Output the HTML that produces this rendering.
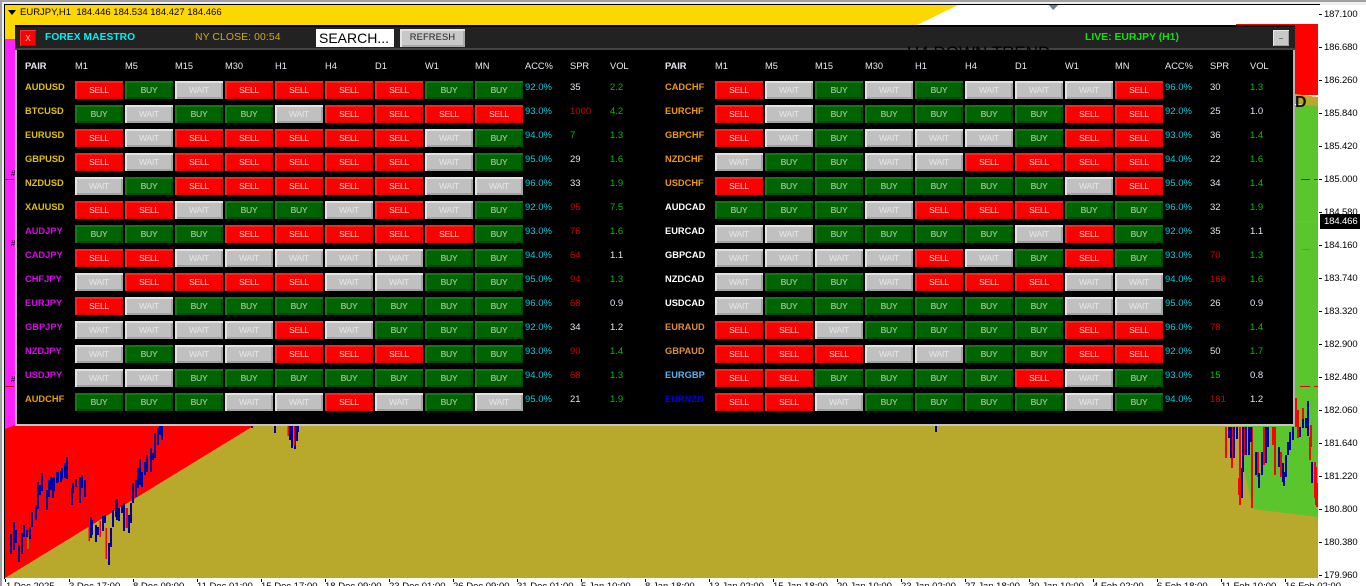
<!DOCTYPE html>
<html><head><meta charset="utf-8"><title>FOREX MAESTRO</title>
<style>
html,body{margin:0;padding:0;width:1366px;height:586px;overflow:hidden;background:#fff;font-family:"Liberation Sans",Arial,sans-serif}
#w{position:relative;width:1366px;height:586px;overflow:hidden;background:#f0f0f0}
.a{position:absolute}
#top{left:0;top:0;width:1366px;height:2px;background:#a0a0a0}
#lft{left:0;top:0;width:2px;height:586px;background:#a0a0a0}
#chart{left:4px;top:4px;width:1314px;height:574px;border:1px solid #000;border-width:1px 1px 1px 1px;background:#fff;box-sizing:content-box;overflow:hidden}
#ax{left:1319px;top:5px;width:47px;height:581px;background:#fff}
#bx{left:0;top:579px;width:1366px;height:7px;background:#fff;overflow:hidden}
.y{position:absolute;left:1324px;font-size:9.5px;line-height:12px;color:#000;letter-spacing:-.12px}
.yt{position:absolute;left:1319px;width:3px;height:1px;background:#000}
.xl{position:absolute;top:2px;font-size:9.5px;line-height:12px;color:#000;white-space:nowrap}
.xt{position:absolute;top:579px;width:1px;height:3px;background:#000}
#panel{left:15px;top:25px;width:1280px;height:401px;background:#000;box-sizing:border-box;border-left:2px solid #b4b4b4;border-right:2px solid #b4b4b4;border-bottom:2px solid #c4c4c4}
#bar{left:15px;top:25px;width:1280px;height:25px;box-sizing:border-box;background:#222;border-top:2px solid #000;border-bottom:2px solid #444;overflow:hidden}
.side{position:absolute;top:81px;display:grid;grid-template-columns:50px repeat(9,50px) 45px 40px 40px;grid-auto-rows:18px;row-gap:6px}
.side>*{display:block}
.side i{font-style:normal;font-size:9.5px;line-height:11px;height:11px;white-space:nowrap;color:#fff;position:relative;top:1px}
.p{font-weight:bold;font-size:9.3px!important}
.c{color:#00d0e0!important}.g{color:#00c000!important}.r{color:#d00000!important}.k{color:#e4e4f4!important}
.gd{color:#e0c000!important}.or{color:#f09a00!important}.mg{color:#e000f0!important}.wh{color:#fff!important}.pe{color:#e08c40!important}.lb{color:#60b0f0!important}.bl{color:#0000e0!important}
.side b{width:48px;height:18px;font-weight:normal;font-size:8.6px;line-height:18px;text-align:center;letter-spacing:-.3px}
.s{background:#f00;color:#ffd8d8;box-shadow:inset 2px 2px 0 #ff2020,inset -2px -2px 0 #e60000}
.u{background:#006400;color:#c4d4c4;box-shadow:inset 2px 2px 0 #147814,inset -2px -2px 0 #004f00}
.h{background:#c0c0c0;color:#e8e8e8;box-shadow:inset 2px 2px 0 #e2e2e2,inset -2px -2px 0 #a2a2a2}
.hd{position:absolute;top:60px;font-size:9.3px;line-height:12px;color:#e8e8f0;white-space:nowrap}
.m{position:absolute;left:11px;font-size:8px;line-height:8px;color:#000;width:4px;overflow:hidden}
</style></head><body><div id="w">
<div class="a" id="chart">
<svg class="a" style="left:-5px;top:-5px" width="1366" height="586" shape-rendering="crispEdges">
<polygon points="5,5 958,5 917,25 15,25 15,39 5,39" fill="#ffd700"/>
<polygon points="5,39 15,39 15,427 5,430" fill="#ff20ff"/>
<polygon points="5,429 15,425 255,425 5,578" fill="#f00"/>
<polygon points="5,578 255,425 1243,425 1243,465 1253,509 1318,517 1318,578" fill="#b8a82c"/>
<polygon points="1243,425 1295,425 1295,105 1318,105 1318,517 1253,509 1243,465" fill="#5ac52c"/>
<polygon points="1236,24 1318,24 1318,95 1236,95" fill="#f00"/>
<polygon points="1295,94 1318,97 1318,106 1295,104" fill="#b8a82c"/>
<polygon points="1049,5 1058,5 1053,10" fill="#708090"/>
<path d="M1295 221.5H1318" stroke="#999" fill="none"/>
<path d="M1301 179.5H1310M1314 179.5H1318M1300 386.5H1310M1314 386.5H1318M5 179.5H14M5 386.5H14" stroke="#e00000" fill="none"/>
<path d="M1302 249.5H1310M5 221.5H15M5 249.5H15" stroke="#30b040" fill="none"/>
<path d="M1226 427V458M1232 438V468M1240 427V505M1252 427V508M1239 478V495M1233 427V458M1244 427V455M1258 452V477M1264 427V465M1275 427V475M1273 427V445M1281 452V477M1296 398V427M1303 408V428M1310 437V460M1311 425V447M1315 462V498M1317 483V507M1298 410V438M1316 467V505" stroke="#f00" stroke-width="2" fill="none"/>
<path d="M1229 427V438M1231 427V458M1234 427V458M1237 427V439M1242 468V498M1243 427V472M1246 427V455M1249 427V455M1251 427V442M1256 452V475M1259 473V488M1262 452V475M1266 427V463M1268 427V447M1279 447V467M1283 463V482M1284 472V486M1286 455V477M1288 442V455M1290 432V450M1293 427V440M1300 427V437M1303 419V428M1306 418V428M1308 401V436M1312 462V483" stroke="#0000a0" stroke-width="2" fill="none"/>
<path d="M28 535V549" stroke="#30e030" stroke-width="1" fill="none"/>
<path d="M11 534V554M14 522V550M16 530V543M19 545V562M22 533V554M24 525V537M27 530V537M30 527V539M32 512V527M36 505V520M38 482V509M40 485V495M42 473V491M47 490V510M49 480V497M51 477V490M53 478V498M54 477V491M57 472V483M58 472V482M61 471V482M62 468V479M65 463V478M67 457V479M72 488V505M73 483V493M76 479V487M80 477V503M82 475V488M85 480V497M91 517V538M92 520V535M96 525V542M98 527V535M103 516V531M105 515V523M109 543V565M111 528V547M113 510V527M116 500V517M117 499V520M119 508V521M122 505V513M124 503V531M129 515V533M131 503V523M133 483V503M136 480V497M138 468V488M140 459V485M142 472V487M145 462V475M147 455V472M151 448V472M153 453V460M155 433V458M158 428V445M160 425V435M162 425V440M252 426V428M275 426V433M290 426V440M292 426V448M295 426V449M297 426V441M298 426V432M936 426V432" stroke="#0000a0" stroke-width="2" fill="none"/>
<path d="M89 521V541M100 521V537M106 528V559M126 508V528M127 508V528M288 426V436M294 426V446" stroke="#f00" stroke-width="1.5" fill="none"/>
</svg>
</div>

<span class="m" style="top:170px">#</span><span class="m" style="top:240px">#</span><span class="m" style="top:376px">#</span>
<div class="a" style="left:1295px;top:92px;font-size:16px;line-height:22px;font-weight:bold;color:#111;width:12px;overflow:hidden;height:20px">D</div>

<div class="a" id="ax"></div>
<div class="a" id="bx">
<span class="xl" style="left:6px">1 Dec 2025</span><span class="xl" style="left:69px">3 Dec 17:00</span><span class="xl" style="left:133px">8 Dec 09:00</span><span class="xl" style="left:197px">11 Dec 01:00</span><span class="xl" style="left:261px">15 Dec 17:00</span><span class="xl" style="left:325px">18 Dec 09:00</span><span class="xl" style="left:389px">23 Dec 01:00</span><span class="xl" style="left:453px">26 Dec 09:00</span><span class="xl" style="left:517px">31 Dec 01:00</span><span class="xl" style="left:581px">5 Jan 10:00</span><span class="xl" style="left:645px">8 Jan 18:00</span><span class="xl" style="left:709px">13 Jan 02:00</span><span class="xl" style="left:773px">15 Jan 18:00</span><span class="xl" style="left:837px">20 Jan 10:00</span><span class="xl" style="left:901px">23 Jan 02:00</span><span class="xl" style="left:965px">27 Jan 18:00</span><span class="xl" style="left:1029px">30 Jan 10:00</span><span class="xl" style="left:1093px">4 Feb 02:00</span><span class="xl" style="left:1157px">6 Feb 18:00</span><span class="xl" style="left:1221px">11 Feb 10:00</span><span class="xl" style="left:1285px">16 Feb 02:00</span>
</div>
<i class="xt" style="left:5px"></i><i class="xt" style="left:69px"></i><i class="xt" style="left:133px"></i><i class="xt" style="left:197px"></i><i class="xt" style="left:261px"></i><i class="xt" style="left:325px"></i><i class="xt" style="left:389px"></i><i class="xt" style="left:453px"></i><i class="xt" style="left:517px"></i><i class="xt" style="left:581px"></i><i class="xt" style="left:645px"></i><i class="xt" style="left:709px"></i><i class="xt" style="left:773px"></i><i class="xt" style="left:837px"></i><i class="xt" style="left:901px"></i><i class="xt" style="left:965px"></i><i class="xt" style="left:1029px"></i><i class="xt" style="left:1093px"></i><i class="xt" style="left:1157px"></i><i class="xt" style="left:1221px"></i><i class="xt" style="left:1285px"></i>

<span class="y" style="top:9px">187.100</span><span class="y" style="top:42px">186.680</span><span class="y" style="top:75px">186.260</span><span class="y" style="top:108px">185.840</span><span class="y" style="top:141px">185.420</span><span class="y" style="top:174px">185.000</span><span class="y" style="top:207px">184.580</span><span class="y" style="top:240px">184.160</span><span class="y" style="top:273px">183.740</span><span class="y" style="top:306px">183.320</span><span class="y" style="top:339px">182.900</span><span class="y" style="top:372px">182.480</span><span class="y" style="top:405px">182.060</span><span class="y" style="top:438px">181.640</span><span class="y" style="top:471px">181.220</span><span class="y" style="top:504px">180.800</span><span class="y" style="top:537px">180.380</span><span class="y" style="top:570px">179.960</span>
<i class="yt" style="top:14px"></i><i class="yt" style="top:47px"></i><i class="yt" style="top:80px"></i><i class="yt" style="top:113px"></i><i class="yt" style="top:146px"></i><i class="yt" style="top:179px"></i><i class="yt" style="top:212px"></i><i class="yt" style="top:245px"></i><i class="yt" style="top:278px"></i><i class="yt" style="top:311px"></i><i class="yt" style="top:344px"></i><i class="yt" style="top:377px"></i><i class="yt" style="top:410px"></i><i class="yt" style="top:443px"></i><i class="yt" style="top:476px"></i><i class="yt" style="top:509px"></i><i class="yt" style="top:542px"></i><i class="yt" style="top:575px"></i>
<div class="a" style="left:1320px;top:214px;width:40px;height:15px;background:#000;color:#fff;font-size:9.5px;line-height:15px;padding-left:4px;box-sizing:border-box;letter-spacing:-.12px">184.466</div>

<div class="a" id="top"></div><div class="a" id="lft"></div>

<svg class="a" style="left:8px;top:10px" width="9" height="6"><polygon points="0,0 8,0 4,5" fill="#000"/></svg>
<div class="a" style="left:20px;top:7px;font-size:9.5px;line-height:12px;color:#000;white-space:pre">EURJPY,H1  184.446 184.534 184.427 184.466</div>

<div class="a" id="panel"></div>
<div class="a" id="bar"></div>
<div class="a" style="left:907px;top:43px;height:7px;overflow:hidden;font-size:17px;line-height:20px;color:#000;white-space:nowrap">H4 DOWN TREND</div>

<div class="a" style="left:20px;top:30px;width:16px;height:16px;background:#f00;box-shadow:inset 1px 1px 0 #ff3030,inset -1px -1px 0 #d00000;color:#ffd0d0;font-size:8.5px;line-height:16px;text-align:center">X</div>
<div class="a" style="left:45px;top:31px;font-size:10.2px;line-height:14px;font-weight:bold;color:#00f0f0;white-space:nowrap;letter-spacing:.1px">FOREX MAESTRO</div>
<div class="a" style="left:195px;top:31px;font-size:10.4px;line-height:14px;color:#d0a820;white-space:nowrap;letter-spacing:.1px">NY CLOSE: 00:54</div>
<div class="a" style="left:316px;top:29px;width:78px;height:18px;background:#fff;color:#000;font-size:14px;line-height:19px;padding-left:3px;box-sizing:border-box;white-space:nowrap">SEARCH...</div>
<div class="a" style="left:400px;top:29px;width:65px;height:18px;background:#c8c8c8;box-shadow:inset 2px 2px 0 #e4e4e4,inset -2px -2px 0 #a8a8a8;color:#222;font-size:9.3px;line-height:17px;text-align:center;letter-spacing:.15px">REFRESH</div>
<div class="a" style="left:1085px;top:31px;font-size:10.4px;line-height:14px;font-weight:bold;color:#10e010;white-space:nowrap">LIVE: EURJPY (H1)</div>
<div class="a" style="left:1273px;top:30px;width:16px;height:16px;background:#c8c8c8;box-shadow:inset 1px 1px 0 #e8e8e8,inset -1px -1px 0 #a0a0a0"><div class="a" style="left:6px;top:8px;width:4px;height:1px;background:#777"></div></div>

<span class="hd p" style="left:25px">PAIR</span><span class="hd" style="left:75px">M1</span><span class="hd" style="left:125px">M5</span><span class="hd" style="left:175px">M15</span><span class="hd" style="left:225px">M30</span><span class="hd" style="left:275px">H1</span><span class="hd" style="left:325px">H4</span><span class="hd" style="left:375px">D1</span><span class="hd" style="left:425px">W1</span><span class="hd" style="left:475px">MN</span><span class="hd" style="left:525px">ACC%</span><span class="hd" style="left:570px">SPR</span><span class="hd" style="left:610px">VOL</span>
<span class="hd p" style="left:665px">PAIR</span><span class="hd" style="left:715px">M1</span><span class="hd" style="left:765px">M5</span><span class="hd" style="left:815px">M15</span><span class="hd" style="left:865px">M30</span><span class="hd" style="left:915px">H1</span><span class="hd" style="left:965px">H4</span><span class="hd" style="left:1015px">D1</span><span class="hd" style="left:1065px">W1</span><span class="hd" style="left:1115px">MN</span><span class="hd" style="left:1165px">ACC%</span><span class="hd" style="left:1210px">SPR</span><span class="hd" style="left:1250px">VOL</span>

<div class="side" style="left:25px">
<i class="p gd">AUDUSD</i><b class="s">SELL</b><b class="u">BUY</b><b class="h">WAIT</b><b class="s">SELL</b><b class="s">SELL</b><b class="s">SELL</b><b class="s">SELL</b><b class="u">BUY</b><b class="u">BUY</b><i class="c">92.0%</i><i class="k">35</i><i class="g">2.2</i>
<i class="p gd">BTCUSD</i><b class="u">BUY</b><b class="h">WAIT</b><b class="u">BUY</b><b class="u">BUY</b><b class="h">WAIT</b><b class="s">SELL</b><b class="s">SELL</b><b class="s">SELL</b><b class="s">SELL</b><i class="c">93.0%</i><i class="r">1000</i><i class="g">4.2</i>
<i class="p gd">EURUSD</i><b class="s">SELL</b><b class="h">WAIT</b><b class="s">SELL</b><b class="s">SELL</b><b class="s">SELL</b><b class="s">SELL</b><b class="s">SELL</b><b class="h">WAIT</b><b class="u">BUY</b><i class="c">94.0%</i><i class="g">7</i><i class="g">1.3</i>
<i class="p gd">GBPUSD</i><b class="s">SELL</b><b class="h">WAIT</b><b class="s">SELL</b><b class="s">SELL</b><b class="s">SELL</b><b class="s">SELL</b><b class="s">SELL</b><b class="h">WAIT</b><b class="u">BUY</b><i class="c">95.0%</i><i class="k">29</i><i class="g">1.6</i>
<i class="p gd">NZDUSD</i><b class="h">WAIT</b><b class="u">BUY</b><b class="s">SELL</b><b class="s">SELL</b><b class="s">SELL</b><b class="s">SELL</b><b class="s">SELL</b><b class="h">WAIT</b><b class="h">WAIT</b><i class="c">96.0%</i><i class="k">33</i><i class="g">1.9</i>
<i class="p gd">XAUUSD</i><b class="s">SELL</b><b class="s">SELL</b><b class="h">WAIT</b><b class="u">BUY</b><b class="u">BUY</b><b class="h">WAIT</b><b class="s">SELL</b><b class="h">WAIT</b><b class="u">BUY</b><i class="c">92.0%</i><i class="r">95</i><i class="g">7.5</i>
<i class="p mg">AUDJPY</i><b class="u">BUY</b><b class="u">BUY</b><b class="u">BUY</b><b class="s">SELL</b><b class="s">SELL</b><b class="s">SELL</b><b class="s">SELL</b><b class="s">SELL</b><b class="u">BUY</b><i class="c">93.0%</i><i class="r">76</i><i class="g">1.6</i>
<i class="p mg">CADJPY</i><b class="s">SELL</b><b class="s">SELL</b><b class="h">WAIT</b><b class="h">WAIT</b><b class="h">WAIT</b><b class="h">WAIT</b><b class="h">WAIT</b><b class="u">BUY</b><b class="u">BUY</b><i class="c">94.0%</i><i class="r">64</i><i class="k">1.1</i>
<i class="p mg">CHFJPY</i><b class="h">WAIT</b><b class="s">SELL</b><b class="s">SELL</b><b class="s">SELL</b><b class="s">SELL</b><b class="h">WAIT</b><b class="h">WAIT</b><b class="u">BUY</b><b class="u">BUY</b><i class="c">95.0%</i><i class="r">94</i><i class="g">1.3</i>
<i class="p mg">EURJPY</i><b class="s">SELL</b><b class="h">WAIT</b><b class="u">BUY</b><b class="u">BUY</b><b class="u">BUY</b><b class="u">BUY</b><b class="u">BUY</b><b class="u">BUY</b><b class="u">BUY</b><i class="c">96.0%</i><i class="r">68</i><i class="k">0.9</i>
<i class="p mg">GBPJPY</i><b class="h">WAIT</b><b class="h">WAIT</b><b class="h">WAIT</b><b class="h">WAIT</b><b class="s">SELL</b><b class="h">WAIT</b><b class="u">BUY</b><b class="u">BUY</b><b class="u">BUY</b><i class="c">92.0%</i><i class="k">34</i><i class="k">1.2</i>
<i class="p mg">NZDJPY</i><b class="h">WAIT</b><b class="u">BUY</b><b class="h">WAIT</b><b class="h">WAIT</b><b class="s">SELL</b><b class="s">SELL</b><b class="s">SELL</b><b class="u">BUY</b><b class="u">BUY</b><i class="c">93.0%</i><i class="r">90</i><i class="g">1.4</i>
<i class="p mg">USDJPY</i><b class="h">WAIT</b><b class="h">WAIT</b><b class="u">BUY</b><b class="u">BUY</b><b class="u">BUY</b><b class="u">BUY</b><b class="u">BUY</b><b class="u">BUY</b><b class="u">BUY</b><i class="c">94.0%</i><i class="r">68</i><i class="g">1.3</i>
<i class="p or">AUDCHF</i><b class="u">BUY</b><b class="u">BUY</b><b class="u">BUY</b><b class="h">WAIT</b><b class="h">WAIT</b><b class="s">SELL</b><b class="h">WAIT</b><b class="u">BUY</b><b class="h">WAIT</b><i class="c">95.0%</i><i class="k">21</i><i class="g">1.9</i>
</div>

<div class="side" style="left:665px">
<i class="p or">CADCHF</i><b class="s">SELL</b><b class="h">WAIT</b><b class="u">BUY</b><b class="h">WAIT</b><b class="u">BUY</b><b class="h">WAIT</b><b class="h">WAIT</b><b class="h">WAIT</b><b class="s">SELL</b><i class="c">96.0%</i><i class="k">30</i><i class="g">1.3</i>
<i class="p or">EURCHF</i><b class="s">SELL</b><b class="h">WAIT</b><b class="u">BUY</b><b class="u">BUY</b><b class="u">BUY</b><b class="u">BUY</b><b class="u">BUY</b><b class="s">SELL</b><b class="s">SELL</b><i class="c">92.0%</i><i class="k">25</i><i class="k">1.0</i>
<i class="p or">GBPCHF</i><b class="s">SELL</b><b class="h">WAIT</b><b class="u">BUY</b><b class="h">WAIT</b><b class="h">WAIT</b><b class="h">WAIT</b><b class="u">BUY</b><b class="s">SELL</b><b class="s">SELL</b><i class="c">93.0%</i><i class="k">36</i><i class="g">1.4</i>
<i class="p or">NZDCHF</i><b class="h">WAIT</b><b class="u">BUY</b><b class="u">BUY</b><b class="h">WAIT</b><b class="h">WAIT</b><b class="s">SELL</b><b class="s">SELL</b><b class="s">SELL</b><b class="s">SELL</b><i class="c">94.0%</i><i class="k">22</i><i class="g">1.6</i>
<i class="p or">USDCHF</i><b class="s">SELL</b><b class="u">BUY</b><b class="u">BUY</b><b class="u">BUY</b><b class="u">BUY</b><b class="u">BUY</b><b class="u">BUY</b><b class="h">WAIT</b><b class="s">SELL</b><i class="c">95.0%</i><i class="k">34</i><i class="g">1.4</i>
<i class="p wh">AUDCAD</i><b class="u">BUY</b><b class="u">BUY</b><b class="u">BUY</b><b class="h">WAIT</b><b class="s">SELL</b><b class="s">SELL</b><b class="s">SELL</b><b class="u">BUY</b><b class="u">BUY</b><i class="c">96.0%</i><i class="k">32</i><i class="g">1.9</i>
<i class="p wh">EURCAD</i><b class="h">WAIT</b><b class="h">WAIT</b><b class="u">BUY</b><b class="u">BUY</b><b class="u">BUY</b><b class="u">BUY</b><b class="h">WAIT</b><b class="s">SELL</b><b class="u">BUY</b><i class="c">92.0%</i><i class="k">35</i><i class="k">1.1</i>
<i class="p wh">GBPCAD</i><b class="h">WAIT</b><b class="h">WAIT</b><b class="h">WAIT</b><b class="h">WAIT</b><b class="s">SELL</b><b class="h">WAIT</b><b class="u">BUY</b><b class="s">SELL</b><b class="u">BUY</b><i class="c">93.0%</i><i class="r">70</i><i class="g">1.3</i>
<i class="p wh">NZDCAD</i><b class="h">WAIT</b><b class="u">BUY</b><b class="u">BUY</b><b class="h">WAIT</b><b class="s">SELL</b><b class="s">SELL</b><b class="s">SELL</b><b class="h">WAIT</b><b class="h">WAIT</b><i class="c">94.0%</i><i class="r">166</i><i class="g">1.6</i>
<i class="p wh">USDCAD</i><b class="h">WAIT</b><b class="u">BUY</b><b class="u">BUY</b><b class="u">BUY</b><b class="u">BUY</b><b class="u">BUY</b><b class="u">BUY</b><b class="h">WAIT</b><b class="h">WAIT</b><i class="c">95.0%</i><i class="k">26</i><i class="k">0.9</i>
<i class="p pe">EURAUD</i><b class="s">SELL</b><b class="s">SELL</b><b class="h">WAIT</b><b class="u">BUY</b><b class="u">BUY</b><b class="u">BUY</b><b class="u">BUY</b><b class="s">SELL</b><b class="s">SELL</b><i class="c">96.0%</i><i class="r">78</i><i class="g">1.4</i>
<i class="p pe">GBPAUD</i><b class="s">SELL</b><b class="s">SELL</b><b class="s">SELL</b><b class="h">WAIT</b><b class="h">WAIT</b><b class="u">BUY</b><b class="u">BUY</b><b class="s">SELL</b><b class="s">SELL</b><i class="c">92.0%</i><i class="k">50</i><i class="g">1.7</i>
<i class="p lb">EURGBP</i><b class="s">SELL</b><b class="s">SELL</b><b class="u">BUY</b><b class="u">BUY</b><b class="u">BUY</b><b class="u">BUY</b><b class="s">SELL</b><b class="h">WAIT</b><b class="u">BUY</b><i class="c">93.0%</i><i class="g">15</i><i class="k">0.8</i>
<i class="p bl">EURNZD</i><b class="s">SELL</b><b class="s">SELL</b><b class="h">WAIT</b><b class="u">BUY</b><b class="u">BUY</b><b class="u">BUY</b><b class="u">BUY</b><b class="h">WAIT</b><b class="u">BUY</b><i class="c">94.0%</i><i class="r">181</i><i class="k">1.2</i>
</div>
</div></body></html>
